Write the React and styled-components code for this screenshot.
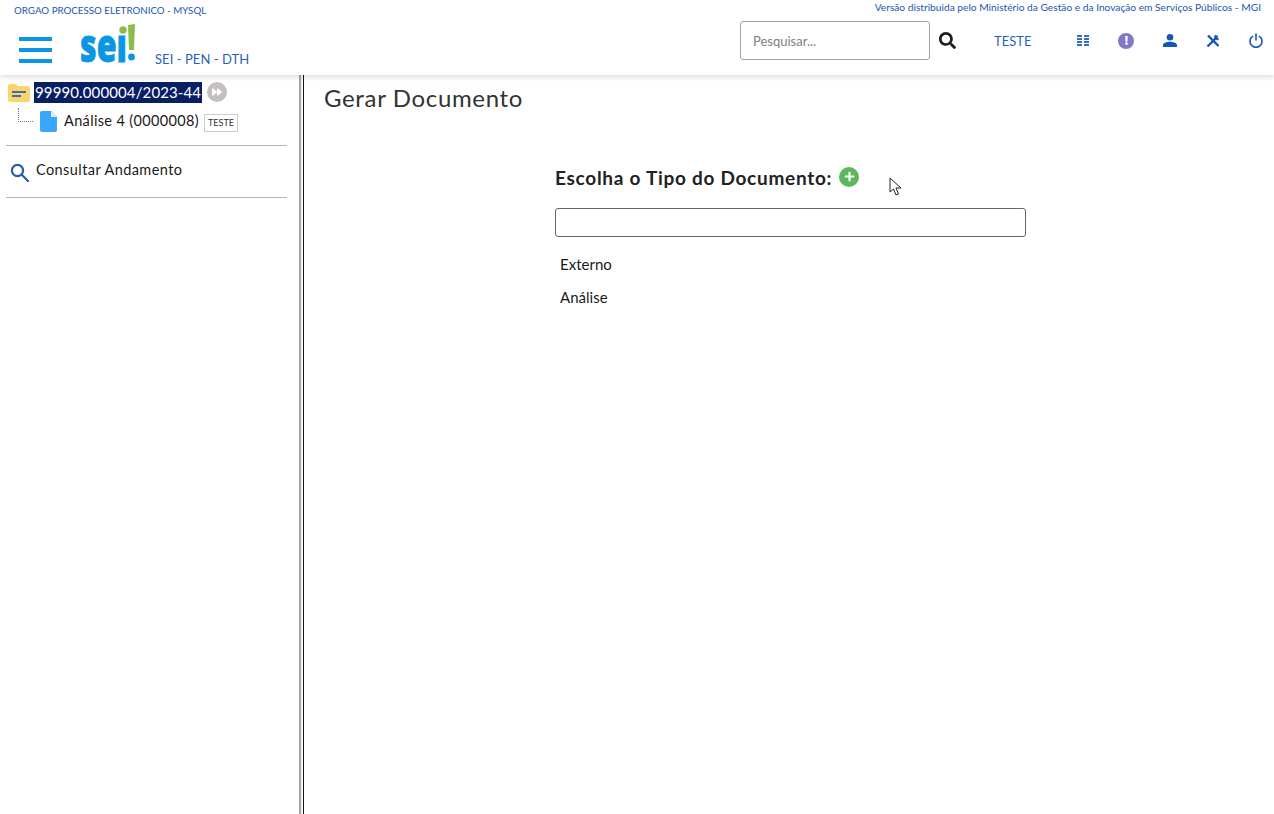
import React from 'react';
import styled, {createGlobalStyle} from "styled-components";
import {FaSearch, FaExclamation, FaForward, FaPlus} from "react-icons/fa";

const Global = createGlobalStyle`
    html, body {
        margin: 0;
        height: 100%;
        background: #fff;
        overflow: hidden;
        font-family: "Lato", "Open Sans", sans-serif;
    }
    * { box-sizing: border-box; }
`

const Page = styled.div`
    display: flex;
    flex-direction: column;
    height: 814px;
    position: relative;
`

const Header = styled.header`
    height: 75px;
    flex: none;
    position: relative;
    z-index: 2;
    background: #fff;
    box-shadow: 0 2px 5px rgba(0,0,0,.14);
`

const TopLine = styled.div`
    display: flex;
    justify-content: space-between;
    padding: 1px 13px 0 14px;
    height: 21px;
    color: #1a56b0;
    font-size: 10.2px;
`

const OrgName = styled.span`
    padding-top: 3px;
    font-size: 9.75px;
`

const MainLine = styled.div`
    display: flex;
    align-items: flex-start;
    height: 54px;
`

const Burger = styled.div`
    width: 33px;
    margin: 16px 0 0 19px;
    display: flex;
    flex-direction: column;
    gap: 7px;

    &>span {
        height: 4px;
        background: #0b96e5;
    }
`

const Logo = styled.svg`
    margin: 3px 0 0 28px;
    flex: none;
    overflow: visible;
`

const SystemName = styled.span`
    margin: 30px 0 0 17px;
    font-size: 13px;
    letter-spacing: .05px;
    color: #1f63c0;
`

const Tools = styled.div`
    margin-left: auto;
    display: flex;
    align-items: center;
    height: 39px;
`

const SearchBox = styled.input`
    width: 190px;
    height: 39px;
    padding: 0 12px;
    border: 1px solid #a3a3a3;
    border-radius: 3px;
    background: #fff;
    font-family: inherit;
    font-size: 13px;
    &::placeholder { color: #808080; opacity: 1; }
`

const SearchIcon = styled(FaSearch)`
    margin-left: 9px;
    color: #1d1d1d;
    font-size: 17px;
`

const UserName = styled.span`
    width: 36px;
    margin-left: 38px;
    font-size: 13px;
    color: #1f63c0;
`

const IconSlot = styled.span`
    width: ${(props)=>props.$w}px;
    margin-left: ${(props)=>props.$ml}px;
    display: flex;
    justify-content: center;
    color: #1558b0;
`

const AlertDot = styled.span`
    width: 16px;
    height: 16px;
    border-radius: 50%;
    background: #7e7ac9;
    color: #fff;
    display: flex;
    align-items: center;
    justify-content: center;
    font-size: 9px;
`

const Body = styled.div`
    flex: 1;
    display: flex;
    min-height: 0;
`

const Side = styled.aside`
    width: 299px;
    flex: none;
    padding: 6px 12px 0 6px;
`

const Divider = styled.div`
    width: 5px;
    flex: none;
    background: linear-gradient(90deg, #a8a8a8 0 2px, #eee 2px 3px, #fff 3px 4px, #111 4px);
`

const TreeRoot = styled.div`
    display: flex;
    align-items: center;
    height: 22px;
    padding-left: 2px;
`

const FolderWrap = styled.svg`
    flex: none;
    margin-right: 4px;
`

const ProcessLink = styled.span`
    background: #0a1f63;
    color: #fff;
    font-size: 15px;
    line-height: 21px;
    padding: 0 1px;
    letter-spacing: .12px;
`

const Forward = styled.span`
    width: 20px;
    height: 20px;
    margin-left: 5px;
    border-radius: 50%;
    background: #c3bfc2;
    color: #fff;
    display: flex;
    align-items: center;
    justify-content: center;
    font-size: 10px;
`

const TreeChild = styled.div`
    display: flex;
    align-items: center;
    height: 24px;
    margin-top: 6px;
    padding-left: 12px;
    position: relative;
`

const Joint = styled.span`
    width: 15px;
    height: 14px;
    margin: -12px 7px 0 0;
    border-left: 1px dotted #777;
    border-bottom: 1px dotted #777;
    flex: none;
`

const DocLabel = styled.span`
    margin: 0 0 2px 7px;
    font-size: 14.5px;
    color: #1a1a1a;
    letter-spacing: .35px;
`

const Tag = styled.span`
    margin: 3px 0 0 5px;
    border: 1px solid #ccc;
    padding: 2px 3px;
    font-size: 9px;
    line-height: 12px;
    color: #333;
`

const SideAction = styled.div`
    margin-top: 12px;
    border-top: 1px solid #b5b5b5;
    border-bottom: 1px solid #b5b5b5;
    height: 53px;
    width: 281px;
    display: flex;
    align-items: flex-start;
    padding: 15px 0 0 4px;
    gap: 7px;
    font-size: 14.5px;
    color: #1a1a1a;
    letter-spacing: .42px;

    svg { margin-top: 2px; }
`

const Content = styled.main`
    flex: 1;
    padding: 8px 20px 0;
`

const Title = styled.h1`
    margin: 0;
    font-size: 24px;
    font-weight: 400;
    line-height: 30px;
    color: #333;
    letter-spacing: .65px;
`

const Form = styled.div`
    margin: 51px 0 0 231px;
    width: 471px;
`

const FormLabel = styled.div`
    display: flex;
    align-items: center;
    gap: 7px;
    height: 26px;
    font-size: 19px;
    font-weight: 700;
    color: #222;
    letter-spacing: .72px;
`

const AddButton = styled.span`
    width: 20px;
    height: 20px;
    border-radius: 50%;
    background: #5cb85c;
    color: #fff;
    display: flex;
    align-items: center;
    justify-content: center;
    font-size: 11px;
    margin-top: -1px;
`

const TypeInput = styled.input`
    display: block;
    width: 471px;
    height: 29px;
    margin-top: 18px;
    border: 1px solid #666;
    border-radius: 3px;
    background: #fff;
`

const TypeList = styled.div`
    margin-top: 11px;
    padding-left: 5px;
    display: flex;
    flex-direction: column;
`

const TypeItem = styled.div`
    height: 33px;
    line-height: 32px;
    font-size: 15px;
    letter-spacing: .02px;
    color: #1a1a1a;
`

const Cursor = styled.svg`
    position: absolute;
    left: 889px;
    top: 177px;
`

function SearchBlue() {
    return (
        <svg width="19" height="19" viewBox="0 0 19 19" fill="none" stroke="#2a5bab" strokeWidth="2.2">
            <circle cx="7.5" cy="7.5" r="5.6"/>
            <path d="M11.8 11.8L18 18" strokeLinecap="round"/>
        </svg>
    );
}

function UserIcon() {
    return (
        <svg width="14" height="13" viewBox="0 0 14 13" fill="currentColor">
            <circle cx="7" cy="3.3" r="3.3"/>
            <path d="M0 13v-1.8C0 9 3.5 7.8 7 7.8s7 1.2 7 3.4V13z"/>
        </svg>
    );
}

function ToolsIcon() {
    return (
        <svg width="14" height="14" viewBox="0 0 14 14" fill="none" stroke="currentColor">
            <path d="M1.5 12.5L10 4" strokeWidth="2.4"/>
            <path d="M9 1.2a3 3 0 0 0-.2 3.4l.8.8a3 3 0 0 0 3.3-.2L11.2 3.5 12 2.2z" fill="currentColor" strokeWidth=".6"/>
            <path d="M2 1.5L12.5 12" strokeWidth="2.4"/>
        </svg>
    );
}

function PowerIcon() {
    return (
        <svg width="14" height="15" viewBox="0 0 14 15" fill="none" stroke="currentColor" strokeWidth="1.6" strokeLinecap="round">
            <path d="M7 1v6"/>
            <path d="M3.6 3.4a6 6 0 1 0 6.8 0"/>
        </svg>
    );
}

function App() {
    return (
        <Page>
            <Global/>
            <Header>
                <TopLine>
                    <OrgName>ORGAO PROCESSO ELETRONICO - MYSQL</OrgName>
                    <span>Versão distribuida pelo Ministério da Gestão e da Inovação em Serviços Públicos - MGI</span>
                </TopLine>
                <MainLine>
                    <Burger><span/><span/><span/></Burger>
                    <Logo width="58" height="42" viewBox="0 0 58 42">
                        <text x="0" y="38" fontFamily="Open Sans" fontWeight="800" fontSize="46" textLength="47" lengthAdjust="spacingAndGlyphs" fill="#0b96e5" stroke="#0b96e5" strokeWidth=".8">seı</text>
                        <circle cx="43" cy="6" r="3.7" fill="#8cbb4e"/>
                        <polygon points="48,1 55,0 54,26 49,26" fill="#8cbb4e"/>
                        <circle cx="51.5" cy="33" r="3.4" fill="#0b96e5"/>
                    </Logo>
                    <SystemName>SEI - PEN - DTH</SystemName>
                    <Tools>
                        <SearchBox placeholder="Pesquisar..."/>
                        <SearchIcon/>
                        <UserName>TESTE</UserName>
                        <IconSlot $w={12} $ml={47}>
                            <svg width="12" height="11" viewBox="0 0 12 11" fill="#3a6cc4">
                                <rect x="0" y="0" width="5" height="2"/><rect x="7" y="0" width="5" height="2"/>
                                <rect x="0" y="3" width="5" height="2"/><rect x="7" y="3" width="5" height="2"/>
                                <rect x="0" y="6" width="5" height="2"/><rect x="7" y="6" width="5" height="2"/>
                                <rect x="0" y="9" width="5" height="2"/><rect x="7" y="9" width="5" height="2"/>
                            </svg>
                        </IconSlot>
                        <IconSlot $w={16} $ml={29}><AlertDot><FaExclamation/></AlertDot></IconSlot>
                        <IconSlot $w={14} $ml={29}><UserIcon/></IconSlot>
                        <IconSlot $w={14} $ml={29}><ToolsIcon/></IconSlot>
                        <IconSlot $w={14} $ml={29}><PowerIcon/></IconSlot>
                        <IconSlot $w={11} $ml={0}/>
                    </Tools>
                </MainLine>
            </Header>
            <Body>
                <Side>
                    <TreeRoot>
                        <FolderWrap width="22" height="19" viewBox="0 0 22 19">
                            <path d="M2 1h6l2 2h10a2 2 0 0 1 2 2v12a2 2 0 0 1-2 2H2a2 2 0 0 1-2-2V3a2 2 0 0 1 2-2z" fill="#fdd36c"/>
                            <rect x="4" y="8" width="14" height="2" fill="#3a6fb8"/>
                            <rect x="4" y="12" width="9" height="2" fill="#3a6fb8"/>
                        </FolderWrap>
                        <ProcessLink>99990.000004/2023-44</ProcessLink>
                        <Forward><FaForward/></Forward>
                    </TreeRoot>
                    <TreeChild>
                        <Joint/>
                        <svg width="17" height="21" viewBox="0 0 17 21">
                            <path d="M2 0h9l6 6v13a2 2 0 0 1-2 2H2a2 2 0 0 1-2-2V2a2 2 0 0 1 2-2z" fill="#3aa6fb"/>
                            <path d="M11 0l6 6h-6z" fill="#d6ecff"/>
                        </svg>
                        <DocLabel>Análise 4 (0000008)</DocLabel>
                        <Tag>TESTE</Tag>
                    </TreeChild>
                    <SideAction>
                        <SearchBlue/>
                        Consultar Andamento
                    </SideAction>
                </Side>
                <Divider/>
                <Content>
                    <Title>Gerar Documento</Title>
                    <Form>
                        <FormLabel>Escolha o Tipo do Documento:<AddButton><FaPlus/></AddButton></FormLabel>
                        <TypeInput/>
                        <TypeList>
                            <TypeItem>Externo</TypeItem>
                            <TypeItem>Análise</TypeItem>
                        </TypeList>
                    </Form>
                </Content>
            </Body>
            <Cursor width="14" height="20" viewBox="0 0 14 20">
                <path d="M1 1v14l3.5-3 2.5 6 2.5-1-2.5-6H12z" fill="#fff" stroke="#222" strokeWidth="1"/>
            </Cursor>
        </Page>
    );
}

export default App;
